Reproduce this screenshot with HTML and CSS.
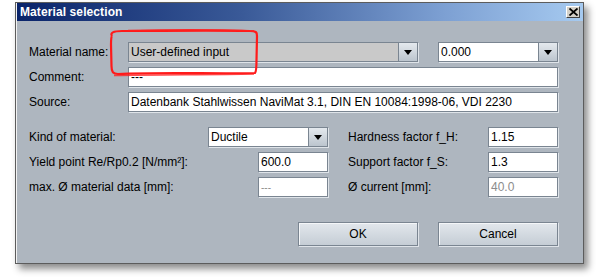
FILE: index.html
```html
<!DOCTYPE html>
<html>
<head>
<meta charset="utf-8">
<link rel="stylesheet" href="styles.css">
</head>
<body>
<div class="window">
  <div class="titlebar">
    <span class="title">Material selection</span>
    <span class="close"><svg width="9" height="8" viewBox="0 0 9 8"><path d="M0.5 0.5 L8.5 7.5 M8.5 0.5 L0.5 7.5" stroke="#000" stroke-width="1.8"/></svg></span>
  </div>
  <div class="content">
    <div class="top">
      <div class="row">
        <span class="lbl lbl-top">Material name:</span>
        <div class="combo gray w290"><span class="val">User-defined input</span><span class="arrow"></span></div>
        <div class="combo w120 ml20"><span class="val">0.000</span><span class="arrow"></span></div>
      </div>
      <div class="row">
        <span class="lbl lbl-top">Comment:</span>
        <div class="field grow"><span class="val">---</span></div>
      </div>
      <div class="row">
        <span class="lbl lbl-top">Source:</span>
        <div class="field grow"><span class="val">Datenbank Stahlwissen NaviMat 3.1, DIN EN 10084:1998-06, VDI 2230</span></div>
      </div>
    </div>
    <div class="params">
      <div class="row">
        <div class="half left"><span class="lbl">Kind of material:</span><div class="combo w120"><span class="val">Ductile</span><span class="arrow"></span></div></div>
        <div class="half right"><span class="lbl">Hardness factor f_H:</span><div class="field w70"><span class="val">1.15</span></div></div>
      </div>
      <div class="row">
        <div class="half left"><span class="lbl">Yield point Re/Rp0.2 [N/mm²]:</span><div class="field w70"><span class="val">600.0</span></div></div>
        <div class="half right"><span class="lbl">Support factor f_S:</span><div class="field w70"><span class="val">1.3</span></div></div>
      </div>
      <div class="row">
        <div class="half left"><span class="lbl">max. Ø material data [mm]:</span><div class="field w70 disabled"><span class="val small">---</span></div></div>
        <div class="half right"><span class="lbl">Ø current [mm]:</span><div class="field w70 disabled"><span class="val">40.0</span></div></div>
      </div>
    </div>
    <div class="buttons">
      <div class="btn">OK</div>
      <div class="btn">Cancel</div>
    </div>
  </div>
</div>
<svg class="annot" width="600" height="280" viewBox="0 0 600 280">
  <path d="M112 36 C110 33 113 31 122 31 C160 31 210 30 250 31 C256 31 257 32 257 36 L256.5 60 C256.5 68 256 72 255 73 C220 74 160 72 118 74 C113 74 111.5 72 111.5 66 L111 45 C111 40 111 37 112 36" fill="none" stroke="#ff1a1a" stroke-width="2.2" stroke-linejoin="round"/>
  <path d="M128 30.5 C170 29.5 220 29.5 254 31" fill="none" stroke="#ff2020" stroke-width="1.6" opacity="0.85"/>
  <path d="M114 75.5 C160 74.5 210 75 254 74" fill="none" stroke="#ff2020" stroke-width="1.4" opacity="0.8"/>
</svg>
</body>
</html>
```

FILE: styles.css
```css
html, body {
  margin: 0;
  padding: 0;
  background: #ffffff;
  width: 600px;
  height: 280px;
  overflow: hidden;
  font-family: "Liberation Sans", Arial, sans-serif;
  font-size: 12px;
  color: #000;
}

.window {
  margin: 2px 0 0 15px;
  width: 569px;
  height: 262px;
  box-sizing: border-box;
  border: 1px solid #5c5c5c;
  background: #aeb6bf;
  box-shadow: inset 1px 1px 0 #f2f2f2, 4px 5px 7px rgba(0, 0, 0, 0.45);
  display: flex;
  flex-direction: column;
}

.titlebar {
  height: 18px;
  margin: 0 0 0 1px;
  background: linear-gradient(to right, #0a246a 0%, #3a5a98 40%, #7c9fd2 75%, #a6caf0 100%);
  display: flex;
  align-items: center;
  justify-content: space-between;
  padding: 0 3px 0 3px;
}

.title {
  color: #fff;
  font-weight: bold;
  font-size: 12px;
  letter-spacing: 0.1px;
}

.close {
  width: 14px;
  height: 12px;
  box-sizing: border-box;
  background: #d4d0c8;
  border: 1px solid;
  border-color: #ffffff #404040 #404040 #ffffff;
  display: flex;
  align-items: center;
  justify-content: center;
}

.content {
  padding: 21px 25px 0 13px;
  display: flex;
  flex-direction: column;
}

.row {
  display: flex;
  align-items: center;
  height: 20px;
}

.top {
  display: flex;
  flex-direction: column;
  gap: 5px;
}

.params {
  display: flex;
  flex-direction: column;
  gap: 5px;
  margin-top: 15px;
}

.lbl {
  white-space: nowrap;
}

.lbl-top {
  width: 99px;
  flex: none;
}

.half {
  display: flex;
  align-items: center;
  height: 20px;
}

.half .lbl {
  flex: 1;
}

.left {
  width: 299px;
}

.right {
  width: 210px;
  margin-left: 20px;
}

.field, .combo {
  height: 20px;
  box-sizing: border-box;
  border: 1px solid #7a8591;
  background: #fff;
  box-shadow: 1px 1px 0 #dfe4e9;
  display: flex;
  align-items: center;
  flex: none;
}

.grow {
  flex: 1;
}

.w290 { width: 290px; }
.w120 { width: 120px; }
.w70 { width: 70px; }
.ml20 { margin-left: 20px; }

.val {
  padding-left: 2px;
  flex: 1;
  white-space: nowrap;
  overflow: hidden;
}

.gray {
  background: #c9c9c9;
}

.disabled .val {
  color: #8c8c8c;
}

.val.small {
  font-size: 10px;
}

.arrow {
  width: 19px;
  height: 18px;
  box-sizing: border-box;
  border-left: 1px solid #7a8591;
  background: linear-gradient(#e4e9ee, #bcc5ce);
  position: relative;
  flex: none;
}

.arrow::after {
  content: "";
  position: absolute;
  left: 5px;
  top: 7px;
  border-left: 4px solid transparent;
  border-right: 4px solid transparent;
  border-top: 5px solid #000;
}

.buttons {
  display: flex;
  justify-content: flex-end;
  gap: 20px;
  margin-top: 25px;
}

.btn {
  width: 120px;
  height: 24px;
  box-sizing: border-box;
  border: 1px solid #7a8591;
  background: linear-gradient(#e2e7ec, #c5cdd5);
  box-shadow: inset 1px 1px 0 #f4f6f8, 1px 1px 0 #dfe4e9;
  display: flex;
  align-items: center;
  justify-content: center;
}

.annot {
  position: absolute;
  left: 0;
  top: 0;
  pointer-events: none;
}
```
